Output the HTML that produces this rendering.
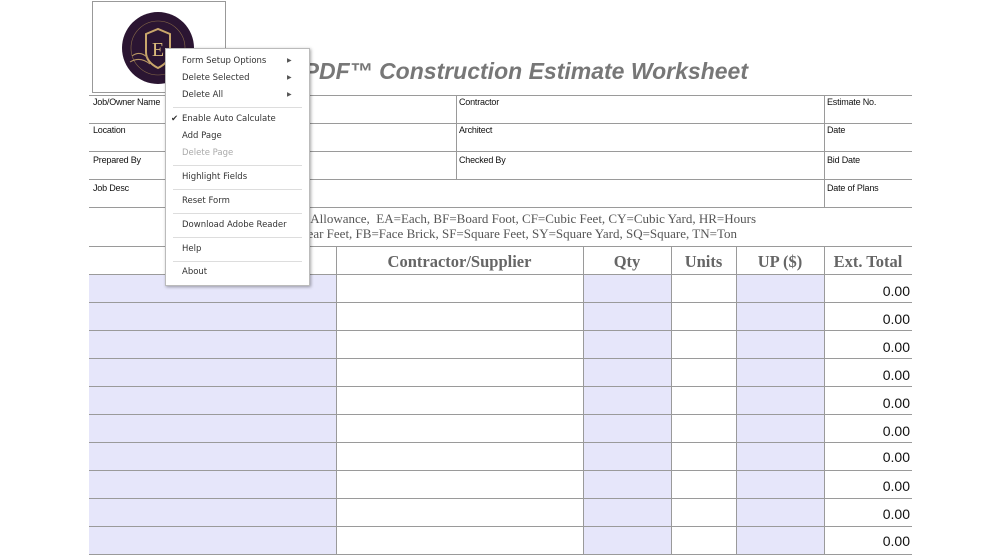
<!DOCTYPE html>
<html><head><meta charset="utf-8"><style>
*{margin:0;padding:0;box-sizing:border-box}
body{width:1000px;height:555px;background:#fff;position:relative;overflow:hidden;font-family:"Liberation Sans",sans-serif}
.a{position:absolute}
.h{position:absolute;height:1px;background:#9a9a9a}
.v{position:absolute;width:1px;background:#9a9a9a}
.lbl{position:absolute;font-size:9px;color:#111;letter-spacing:-0.2px}
.blue{position:absolute;background:#e6e6fa}
.th{position:absolute;top:252px;font-family:"Liberation Serif",serif;font-weight:bold;font-size:16.5px;color:#666;text-align:center}
.z{position:absolute;left:826px;width:84px;text-align:right;font-size:14px;color:#111}
.menu{position:absolute;left:165px;top:48px;width:145px;height:238px;background:#fff;border:1px solid #bbb;box-shadow:1px 1px 3px rgba(0,0,0,.35)}
.mi{position:absolute;left:16px;font-size:8.5px;color:#333;font-family:"DejaVu Sans",sans-serif}
.ms{position:absolute;left:7px;width:129px;height:1px;background:#ddd}
.arr{position:absolute;left:121px;font-size:6px;color:#555}
.lg{position:absolute;font-family:'Liberation Serif',serif;font-size:13px;color:#555;white-space:nowrap}
</style></head><body>
<div class="a" style="left:92px;top:1px;width:134px;height:92px;border:1px solid #999"></div>
<svg class="a" style="left:120px;top:10px" width="76" height="76" viewBox="0 0 76 76">
<circle cx="38" cy="38" r="36" fill="#2b1532"/>
<circle cx="38" cy="38" r="27" fill="none" stroke="#8a6d48" stroke-width="0.6"/>
<path d="M26 24 L38 19 L50 24 L50 42 Q50 52 38 58 Q26 52 26 42Z" fill="none" stroke="#c9a66b" stroke-width="2"/>
<text x="38" y="46" text-anchor="middle" font-family="Liberation Serif" font-size="20" fill="#d9b97a">E</text>
<path d="M12 46 Q20 40 28 48 M10 52 Q20 46 30 54 M48 48 Q56 40 64 46" stroke="#b89664" fill="none" stroke-width="1"/>
</svg>
<div class="a" style="right:252px;top:58px;font-size:23px;font-weight:bold;font-style:italic;color:#777">EasyPDF™ Construction Estimate Worksheet</div>

<div class="h" style="left:89px;width:823px;top:95px"></div>
<div class="h" style="left:89px;width:823px;top:123px"></div>
<div class="h" style="left:89px;width:823px;top:151px"></div>
<div class="h" style="left:89px;width:823px;top:179px"></div>
<div class="h" style="left:89px;width:823px;top:207px"></div>
<div class="v" style="left:456px;top:95px;height:85px"></div>
<div class="v" style="left:824px;top:95px;height:112px"></div>
<div class="lbl" style="left:93px;top:97px">Job/Owner Name</div>
<div class="lbl" style="left:93px;top:125px">Location</div>
<div class="lbl" style="left:93px;top:155px">Prepared By</div>
<div class="lbl" style="left:93px;top:183px">Job Desc</div>
<div class="lbl" style="left:459px;top:97px">Contractor</div>
<div class="lbl" style="left:459px;top:125px">Architect</div>
<div class="lbl" style="left:459px;top:155px">Checked By</div>
<div class="lbl" style="left:827px;top:97px">Estimate No.</div>
<div class="lbl" style="left:827px;top:125px">Date</div>
<div class="lbl" style="left:827px;top:155px">Bid Date</div>
<div class="lbl" style="left:827px;top:183px">Date of Plans</div>

<div class="lg" style="right:244px;top:211px">AL=Allowance,&nbsp; EA=Each, BF=Board Foot, CF=Cubic Feet, CY=Cubic Yard, HR=Hours</div>
<div class="lg" style="right:263px;top:226px">LF=Linear Feet, FB=Face Brick, SF=Square Feet, SY=Square Yard, SQ=Square, TN=Ton</div>

<div class="blue" style="left:89px;top:275px;width:247px;height:280px"></div>
<div class="blue" style="left:584px;top:275px;width:87px;height:280px"></div>
<div class="blue" style="left:737px;top:275px;width:87px;height:280px"></div>
<div class="h" style="left:89px;width:823px;top:246px"></div>
<div class="h" style="left:89px;width:823px;top:274px"></div>
<div class="h" style="left:89px;width:823px;top:302px"></div>
<div class="h" style="left:89px;width:823px;top:330px"></div>
<div class="h" style="left:89px;width:823px;top:358px"></div>
<div class="h" style="left:89px;width:823px;top:386px"></div>
<div class="h" style="left:89px;width:823px;top:414px"></div>
<div class="h" style="left:89px;width:823px;top:442px"></div>
<div class="h" style="left:89px;width:823px;top:470px"></div>
<div class="h" style="left:89px;width:823px;top:498px"></div>
<div class="h" style="left:89px;width:823px;top:526px"></div>
<div class="h" style="left:89px;width:823px;top:554px"></div>
<div class="v" style="left:336px;top:246px;height:309px"></div>
<div class="v" style="left:583px;top:246px;height:309px"></div>
<div class="v" style="left:671px;top:246px;height:309px"></div>
<div class="v" style="left:736px;top:246px;height:309px"></div>
<div class="v" style="left:824px;top:246px;height:309px"></div>
<div class="th" style="left:89px;width:247px">Description</div>
<div class="th" style="left:336px;width:247px">Contractor/Supplier</div>
<div class="th" style="left:583px;width:88px">Qty</div>
<div class="th" style="left:671px;width:65px">Units</div>
<div class="th" style="left:736px;width:88px">UP ($)</div>
<div class="th" style="left:824px;width:88px">Ext. Total</div>
<div class="z" style="top:283px">0.00</div>
<div class="z" style="top:311px">0.00</div>
<div class="z" style="top:339px">0.00</div>
<div class="z" style="top:367px">0.00</div>
<div class="z" style="top:395px">0.00</div>
<div class="z" style="top:423px">0.00</div>
<div class="z" style="top:449px">0.00</div>
<div class="z" style="top:478px">0.00</div>
<div class="z" style="top:506px">0.00</div>
<div class="z" style="top:533px">0.00</div>

<div class="menu">
<div class="mi" style="top:7px">Form Setup Options</div><div class="arr" style="top:8px">▶</div>
<div class="mi" style="top:24px">Delete Selected</div><div class="arr" style="top:25px">▶</div>
<div class="mi" style="top:41px">Delete All</div><div class="arr" style="top:42px">▶</div>
<div class="ms" style="top:58px"></div>
<div class="mi" style="left:5px;top:65px">✔</div>
<div class="mi" style="top:65px">Enable Auto Calculate</div>
<div class="mi" style="top:82px">Add Page</div>
<div class="mi" style="top:99px;color:#aaa">Delete Page</div>
<div class="ms" style="top:116px"></div>
<div class="mi" style="top:123px">Highlight Fields</div>
<div class="ms" style="top:140px"></div>
<div class="mi" style="top:147px">Reset Form</div>
<div class="ms" style="top:164px"></div>
<div class="mi" style="top:171px">Download Adobe Reader</div>
<div class="ms" style="top:188px"></div>
<div class="mi" style="top:195px">Help</div>
<div class="ms" style="top:212px"></div>
<div class="mi" style="top:218px">About</div>
</div>
</body></html>
